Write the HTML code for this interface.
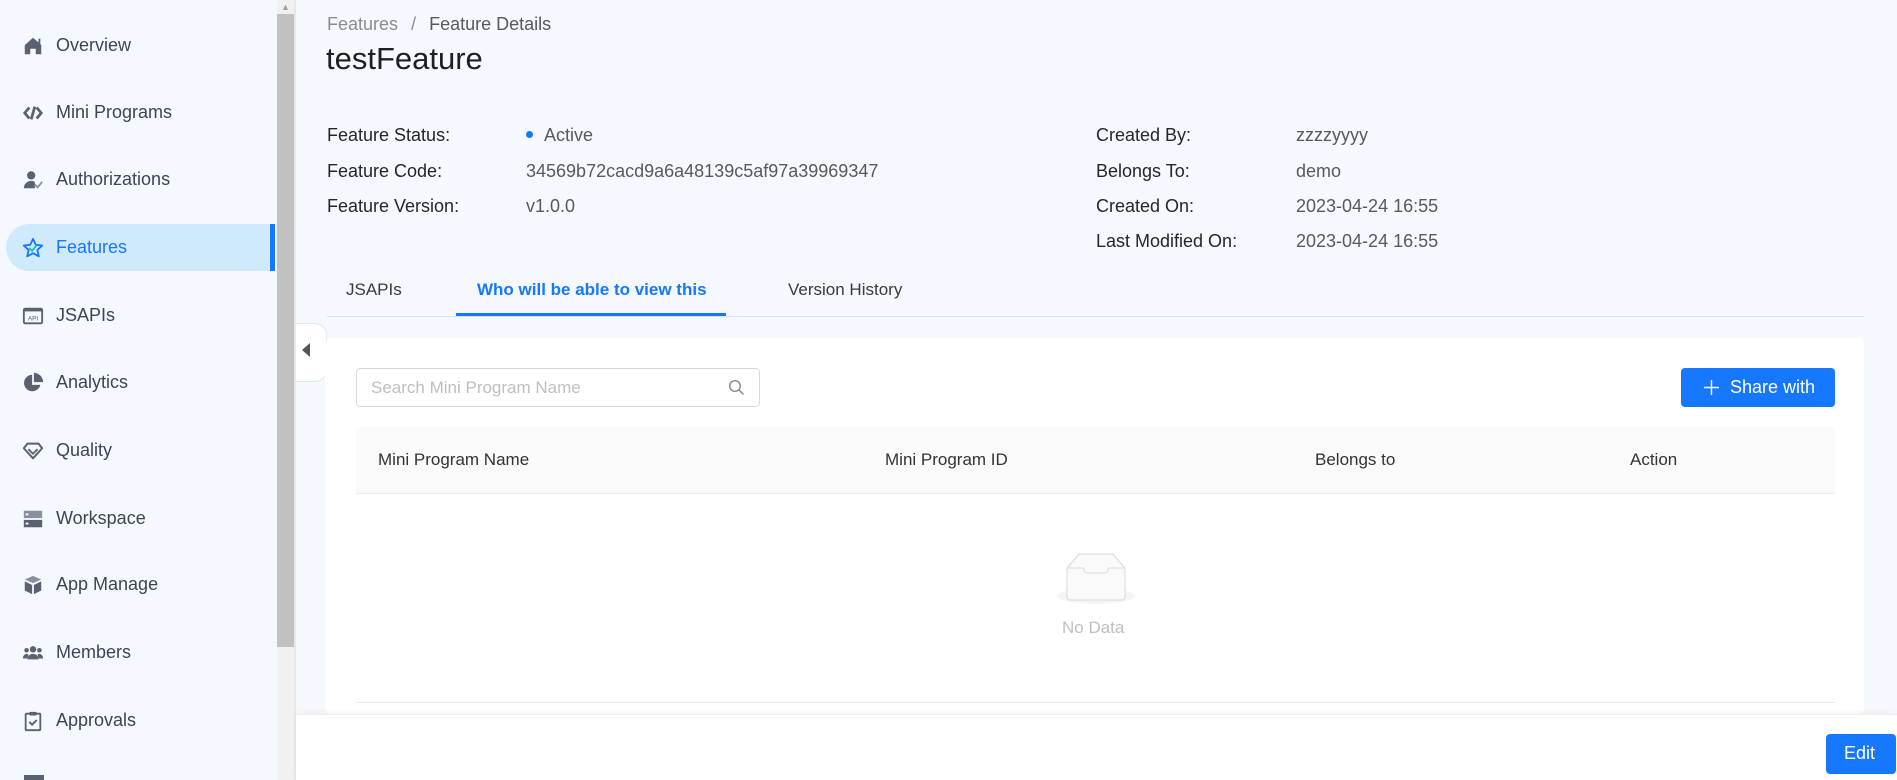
<!DOCTYPE html>
<html><head><meta charset="utf-8">
<style>
*{box-sizing:border-box;margin:0;padding:0}
body{width:1897px;height:780px;overflow:hidden;background:#f5f8fe;font-family:"Liberation Sans",sans-serif;color:#262626;position:relative}
.side{position:absolute;left:0;top:0;width:277px;height:780px;background:#f5f8fe}
.item{position:absolute;left:6px;width:264px;height:47px;display:flex;align-items:center;padding-left:16px;font-size:18px;color:#3d4555}
.item svg{width:22px;height:22px;margin-right:12px;flex:none}
.item.act{background:#cfeafd;border-radius:24px 0 0 24px;color:#1677ff}
.bar{position:absolute;left:270px;top:224px;width:5px;height:47px;background:#1677ff}
.sb{position:absolute;left:277px;top:0;width:17px;height:780px;background:#f1f1f1}
.thumb{position:absolute;left:277px;top:14px;width:17px;height:633px;background:#c1c1c1}
.sbl{position:absolute;left:294px;top:0;width:2px;height:780px;background:#e8e8e8}
.t{position:absolute;white-space:nowrap}
.lab{font-size:18px;color:#262626}
.val{font-size:18px;color:#595959}
.card{position:absolute;left:325px;top:338px;width:1539px;height:376px;background:#fff;border-radius:6px}
.footer{position:absolute;left:296px;top:714px;width:1601px;height:66px;background:#fff;border-top:1px solid #eee;box-shadow:0 -2px 6px rgba(0,0,0,.04)}
</style></head><body>
<div class="side">
 <div class="item" style="top:22px"><svg viewBox="0 0 24 24"><path d="M3 11L12 3l6 5V4h2v6l1 1v10h-6v-6h-6v6H3z" fill="#5a6170"/></svg>Overview</div>
 <div class="item" style="top:89px"><svg viewBox="0 0 24 24"><path d="M8 6L3 12l5 6M16 6l5 6-5 6M14 5l-4 14" stroke="#5a6170" stroke-width="3" fill="none"/></svg>Mini Programs</div>
 <div class="item" style="top:156px"><svg viewBox="0 0 24 24"><circle cx="10" cy="7" r="4.5" fill="#5a6170"/><path d="M2 21c0-5 4-8 8-8 2 0 3 .5 4 1v7z" fill="#5a6170"/><path d="M14 17l3 3 5-6" stroke="#8a909c" stroke-width="2" fill="none"/></svg>Authorizations</div>
 <div class="item act" style="top:224px"><svg viewBox="0 0 24 24"><path d="M12 2l3 6.5 7 .8-5.2 4.8 1.5 7L12 17.6 5.7 21.1l1.5-7L2 9.3l7-.8z" stroke="#1677ff" stroke-width="2" fill="none" stroke-linejoin="round"/><path d="M8 12l3 3 5-6" stroke="#13c2c2" stroke-width="2" fill="none"/></svg>Features</div>
 <div class="item" style="top:292px"><svg viewBox="0 0 24 24"><rect x="2" y="4" width="20" height="16" rx="1.5" stroke="#5a6170" stroke-width="2" fill="none"/><rect x="2" y="4" width="20" height="3" fill="#5a6170"/><text x="12" y="17" font-size="7" text-anchor="middle" fill="#5a6170" font-family="Liberation Sans">API</text></svg>JSAPIs</div>
 <div class="item" style="top:359px"><svg viewBox="0 0 24 24"><path d="M11 3a9 9 0 1 0 9 11h-9z" fill="#5a6170"/><path d="M13 1v10h10A10 10 0 0 0 13 1z" fill="#5a6170"/></svg>Analytics</div>
 <div class="item" style="top:427px"><svg viewBox="0 0 24 24"><path d="M2 9l4-5h12l4 5-10 11z" stroke="#5a6170" stroke-width="2.2" fill="none" stroke-linejoin="round"/><path d="M7 10l5 5 5-5" stroke="#5a6170" stroke-width="2" fill="none"/></svg>Quality</div>
 <div class="item" style="top:495px"><svg viewBox="0 0 24 24"><rect x="2" y="3" width="20" height="8" fill="#8a909c"/><rect x="2" y="13" width="20" height="8" fill="#5a6170"/><rect x="4" y="6" width="3" height="2" fill="#fff"/><rect x="4" y="16" width="3" height="2" fill="#fff"/></svg>Workspace</div>
 <div class="item" style="top:561px"><svg viewBox="0 0 24 24"><path d="M12 2l9 4-9 4-9-4z" fill="#8a909c"/><path d="M3 8l8 4v10l-8-4zM21 8l-8 4v10l8-4z" fill="#5a6170"/></svg>App Manage</div>
 <div class="item" style="top:629px"><svg viewBox="0 0 24 24"><circle cx="12" cy="8" r="3.5" fill="#5a6170"/><circle cx="5" cy="9" r="2.5" fill="#5a6170"/><circle cx="19" cy="9" r="2.5" fill="#5a6170"/><path d="M6 19c0-4 3-6 6-6s6 2 6 6z" fill="#5a6170"/><path d="M1 18c0-3 2-5 4-5 1 0 2 .5 2 1l-1 4zM23 18c0-3-2-5-4-5-1 0-2 .5-2 1l1 4z" fill="#5a6170"/></svg>Members</div>
 <div class="item" style="top:697px"><svg viewBox="0 0 24 24"><rect x="4" y="4" width="16" height="18" rx="1" stroke="#5a6170" stroke-width="2" fill="none"/><rect x="8" y="2" width="8" height="4" rx="1" fill="#5a6170"/><path d="M8 13l3 3 5-5" stroke="#5a6170" stroke-width="2" fill="none"/></svg>Approvals</div>
 <div style="position:absolute;left:24px;top:775px;width:20px;height:5px;background:#5a6170"></div>
 <div class="bar"></div>
</div>
<div class="sb"></div><div class="thumb"></div><div class="sbl"></div>
<div class="t" style="left:281px;top:2px;font-size:9px;color:#a0a0a0">▲</div>

<div class="t" style="left:327px;top:14px;font-size:18px;color:#8c8c8c">Features <span style="margin:0 8px">/</span> <span style="color:#595959">Feature Details</span></div>
<div class="t" style="left:326px;top:41px;font-size:31px;color:#1f1f1f">testFeature</div>

<div class="t lab" style="left:327px;top:125px">Feature Status:</div>
<div class="t val" style="left:526px;top:125px"><span style="display:inline-block;width:7px;height:7px;border-radius:50%;background:#1677ff;margin-right:11px;vertical-align:middle;position:relative;top:-2px"></span>Active</div>
<div class="t lab" style="left:327px;top:161px">Feature Code:</div>
<div class="t val" style="left:526px;top:161px">34569b72cacd9a6a48139c5af97a39969347</div>
<div class="t lab" style="left:327px;top:196px">Feature Version:</div>
<div class="t val" style="left:526px;top:196px">v1.0.0</div>

<div class="t lab" style="left:1096px;top:125px">Created By:</div>
<div class="t val" style="left:1296px;top:125px">zzzzyyyy</div>
<div class="t lab" style="left:1096px;top:161px">Belongs To:</div>
<div class="t val" style="left:1296px;top:161px">demo</div>
<div class="t lab" style="left:1096px;top:196px">Created On:</div>
<div class="t val" style="left:1296px;top:196px">2023-04-24 16:55</div>
<div class="t lab" style="left:1096px;top:231px">Last Modified On:</div>
<div class="t val" style="left:1296px;top:231px">2023-04-24 16:55</div>

<div class="t" style="left:346px;top:280px;font-size:17px;color:#3a3a3a">JSAPIs</div>
<div class="t" style="left:477px;top:280px;font-size:17px;color:#1677ff;font-weight:bold">Who will be able to view this</div>
<div class="t" style="left:788px;top:280px;font-size:17px;color:#3a3a3a">Version History</div>
<div style="position:absolute;left:327px;top:316px;width:1537px;height:1px;background:#dde3ec"></div>
<div style="position:absolute;left:456px;top:313px;width:270px;height:3px;background:#1677ff"></div>

<div style="position:absolute;left:296px;top:323px;width:31px;height:59px;background:#fff;border:1px solid #e4e8ef;border-left:none;border-radius:0 12px 12px 0"></div>
<div class="t" style="left:302px;top:343px;width:0;height:0;border-top:7px solid transparent;border-bottom:7px solid transparent;border-right:8px solid #555"></div>

<div class="card"></div>
<div style="position:absolute;left:356px;top:368px;width:404px;height:39px;border:1px solid #d9d9d9;border-radius:4px;background:#fff"></div>
<div class="t" style="left:371px;top:378px;font-size:17px;color:#bfbfbf">Search Mini Program Name</div>
<svg style="position:absolute;left:728px;top:379px" width="17" height="17" viewBox="0 0 17 17"><circle cx="7" cy="7" r="5.3" stroke="#888" stroke-width="1.4" fill="none"/><path d="M11 11l4.5 4.5" stroke="#888" stroke-width="1.4"/></svg>
<div style="position:absolute;left:1681px;top:368px;width:154px;height:39px;background:#1677ff;border-radius:4px"></div>
<svg style="position:absolute;left:1704px;top:380px" width="15" height="15" viewBox="0 0 15 15"><path d="M7.5 0v15M0 7.5h15" stroke="#fff" stroke-width="1.4"/></svg>
<div class="t" style="left:1730px;top:377px;font-size:18px;color:#fff">Share with</div>

<div style="position:absolute;left:356px;top:427px;width:1479px;height:67px;background:#fafafa;border-bottom:1px solid #ececec;border-radius:6px 6px 0 0"></div>
<div class="t" style="left:378px;top:450px;font-size:17px;color:#333">Mini Program Name</div>
<div class="t" style="left:885px;top:450px;font-size:17px;color:#333">Mini Program ID</div>
<div class="t" style="left:1315px;top:450px;font-size:17px;color:#333">Belongs to</div>
<div class="t" style="left:1630px;top:450px;font-size:17px;color:#333">Action</div>

<svg style="position:absolute;left:1055px;top:553px" width="82" height="52" viewBox="0 0 82 52"><ellipse cx="41" cy="43" rx="39" ry="8" fill="#f5f5f5"/><path d="M12 15L24 1h34l12 14v29a3 3 0 0 1-3 3H15a3 3 0 0 1-3-3z" fill="#fafafa" stroke="#d9d9d9" stroke-width="1"/><path d="M12 15h16c1 0 1 5 3 5h20c2 0 2-5 3-5h16" fill="none" stroke="#d9d9d9"/></svg>
<div class="t" style="left:1062px;top:618px;font-size:17px;color:#bfbfbf">No Data</div>
<div style="position:absolute;left:356px;top:702px;width:1479px;height:1px;background:#ececec"></div>

<div class="footer"></div>
<div style="position:absolute;left:1826px;top:734px;width:70px;height:40px;background:#1677ff;border-radius:4px"></div>
<div class="t" style="left:1844px;top:743px;font-size:18px;color:#fff">Edit</div>
</body></html>
